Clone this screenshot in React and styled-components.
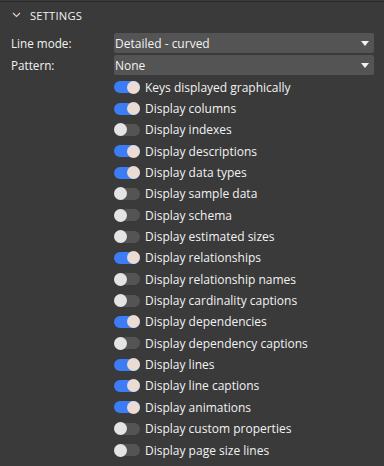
import styled, { createGlobalStyle } from 'styled-components'

const Global = createGlobalStyle`
  html, body {
    margin: 0;
    background: #3a3a3a;
  }
  body {
    font-family: "Open Sans", "Noto Sans", sans-serif;
  }
`

const Panel = styled.div`
  width: 384px;
  height: 466px;
  box-sizing: border-box;
  background: #3a3a3a;
  border-top: 1px solid #2a2a2a;
  margin-top: 1px;
  color: #f2f2f2;
  font-size: 12px;
  overflow: hidden;
`

const Header = styled.div`
  display: flex;
  align-items: center;
  gap: 9px;
  height: 26px;
  padding-left: 12px;
  font-size: 11.2px;
  letter-spacing: 0.2px;
`

const Fields = styled.div`
  display: grid;
  grid-template-columns: 103px 260px;
  row-gap: 2px;
  padding: 5px 0 0 11px;
`

const Label = styled.div`
  height: 20px;
  line-height: 20px;
  font-size: 11.7px;
`

const Select = styled.div`
  height: 20px;
  background: #545454;
  border-radius: 2px;
  display: flex;
  align-items: center;
  justify-content: space-between;
  padding: 0 5px 0 1px;
  font-size: 12px;
`

const Caret = styled.span`
  width: 0;
  height: 0;
  border-left: 4px solid transparent;
  border-right: 4px solid transparent;
  border-top: 5px solid #f2f2f2;
`

const List = styled.div`
  display: flex;
  flex-direction: column;
  padding: 1.5px 0 0 114px;
`

const Row = styled.div`
  display: flex;
  align-items: center;
  gap: 5px;
  height: 21.35px;
  font-size: 12px;
`

const Track = styled.span`
  position: relative;
  width: 26px;
  height: 12px;
  border-radius: 6px;
  background: ${p => (p.$on ? '#3c7cf4' : '#545454')};
  flex: none;
`

const Knob = styled.span`
  position: absolute;
  top: -0.5px;
  left: ${p => (p.$on ? '13px' : '0')};
  width: 13px;
  height: 13px;
  border-radius: 50%;
  background: ${p => (p.$on ? '#eadbd3' : '#e4e4e4')};
`

const items = [
  ['Keys displayed graphically', true],
  ['Display columns', true],
  ['Display indexes', false],
  ['Display descriptions', true],
  ['Display data types', true],
  ['Display sample data', false],
  ['Display schema', false],
  ['Display estimated sizes', false],
  ['Display relationships', true],
  ['Display relationship names', false],
  ['Display cardinality captions', false],
  ['Display dependencies', true],
  ['Display dependency captions', false],
  ['Display lines', true],
  ['Display line captions', true],
  ['Display animations', true],
  ['Display custom properties', false],
  ['Display page size lines', false],
]

export default function App() {
  return (
    <>
      <Global />
      <Panel>
        <Header>
          <svg width="9" height="6" viewBox="0 0 9 6">
            <path d="M1 1 L4.5 4.5 L8 1" fill="none" stroke="#d8d8d8" strokeWidth="1.1" />
          </svg>
          SETTINGS
        </Header>
        <Fields>
          <Label>Line mode:</Label>
          <Select>
            Detailed - curved
            <Caret />
          </Select>
          <Label>Pattern:</Label>
          <Select>
            None
            <Caret />
          </Select>
        </Fields>
        <List>
          {items.map(([text, on]) => (
            <Row key={text}>
              <Track $on={on}>
                <Knob $on={on} />
              </Track>
              {text}
            </Row>
          ))}
        </List>
      </Panel>
    </>
  )
}
